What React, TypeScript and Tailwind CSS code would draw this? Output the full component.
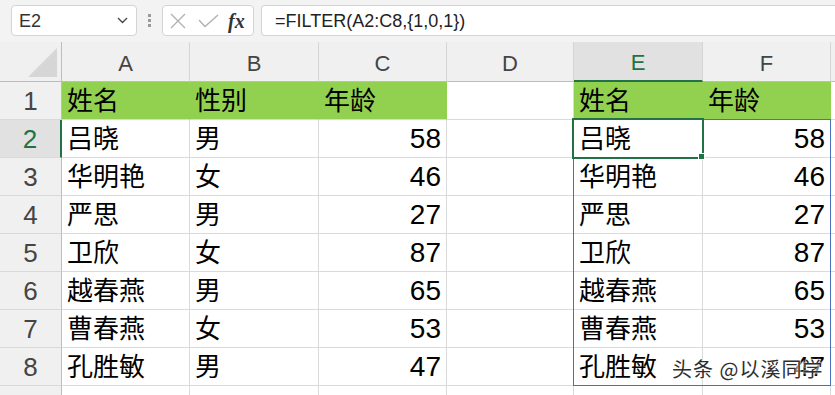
import React from 'react';

const COLS = [
  { k: 'A', w: 'w-[128px]' },
  { k: 'B', w: 'w-[129px]' },
  { k: 'C', w: 'w-[128px]' },
  { k: 'D', w: 'w-[127px]' },
  { k: 'E', w: 'w-[129px]' },
  { k: 'F', w: 'w-[128px]' },
];

const people: [string, string, number][] = [
  ['吕晓', '男', 58],
  ['华明艳', '女', 46],
  ['严思', '男', 27],
  ['卫欣', '女', 87],
  ['越春燕', '男', 65],
  ['曹春燕', '女', 53],
  ['孔胜敏', '男', 47],
];

type Val = string | number;

const Cell: React.FC<{ w: string; v: Val; green?: boolean }> = ({ w, v, green }) => {
  const isNum = typeof v === 'number';
  return (
    <div
      className={`${w} shrink-0 h-full flex items-center leading-none text-black ${
        green ? 'bg-[#92d050] border-r border-b border-r-[#92d050] border-b-[#dadada]' : 'border-r border-b border-[#dadada]'
      } ${isNum ? 'justify-end pr-[5px] text-[28px]' : 'pl-[5px] text-[26px]'}`}
    >
      {v}
    </div>
  );
};

const RowHead: React.FC<{ n: number; active?: boolean }> = ({ n, active }) => (
  <div
    className={`w-[62px] shrink-0 h-full flex items-center justify-center text-[26px] leading-none border-b border-[#d9d9d9] ${
      active ? 'bg-[#e1e1e1] text-[#217346] border-r-2 border-r-[#217346]' : 'bg-[#f0f0f0] text-[#444] border-r border-r-[#bdbdbd]'
    }`}
  >
    {n}
  </div>
);

export default function App() {
  const rows: { vals: Val[]; green: boolean }[] = [
    { vals: ['姓名', '性别', '年龄', '', '姓名', '年龄'], green: true },
    ...people.map(([name, sex, age]) => ({ vals: [name, sex, age, '', name, age] as Val[], green: false })),
  ];

  return (
    <div className="relative w-[835px] h-[395px] overflow-hidden bg-white font-['Liberation_Sans','Noto_Sans_CJK_SC',sans-serif]">
      {/* formula bar */}
      <div className="h-[42px] bg-[#f3f3f3] flex items-start pt-[5px]">
        <div className="ml-[11px] w-[126px] h-[31px] bg-white border border-[#d4d4d4] rounded-[4px] flex items-center justify-between pl-[7px] pr-[8px]">
          <span className="text-[18px] text-[#333] leading-none">E2</span>
          <svg width="11" height="7" viewBox="0 0 11 7">
            <path d="M1 1 L5.5 5.5 L10 1" fill="none" stroke="#444" strokeWidth="1.3" />
          </svg>
        </div>
        <div className="w-[25px] h-[31px] flex flex-col items-center justify-center gap-[2px]">
          <div className="w-[3px] h-[3px] bg-[#9a9a9a]" />
          <div className="w-[3px] h-[3px] bg-[#9a9a9a]" />
          <div className="w-[3px] h-[3px] bg-[#9a9a9a]" />
        </div>
        <div className="w-[92px] h-[31px] bg-white border border-[#d4d4d4] rounded-[4px] flex items-center">
          <svg className="ml-[7px]" width="16" height="16" viewBox="0 0 16 16">
            <path d="M1 1 L15 15 M15 1 L1 15" stroke="#b0b0b0" strokeWidth="1.3" />
          </svg>
          <svg className="ml-[12px]" width="21" height="14" viewBox="0 0 21 14">
            <path d="M1 6 L7 12.5 L20 1" fill="none" stroke="#b0b0b0" strokeWidth="1.3" />
          </svg>
          <span className="ml-[9px] font-['Liberation_Serif',serif] italic font-bold text-[20px] leading-none text-[#333]">fx</span>
        </div>
        <div className="ml-[7px] flex-1 h-[31px] bg-white border border-r-0 border-[#d4d4d4] rounded-l-[4px] flex items-center pl-[13px] text-[18px] leading-none text-[#222]">
          =FILTER(A2:C8,{'{'}1,0,1{'}'})
        </div>
      </div>

      {/* column headers */}
      <div className="flex h-[40px]">
        <div className="w-[62px] shrink-0 h-full bg-[#f0f0f0] border-r border-b border-[#bdbdbd] flex items-end justify-end pr-[3px] pb-[3px]">
          <svg width="30" height="30" viewBox="0 0 30 30">
            <polygon points="29,0 29,29 0,29" fill="#d6d6d6" />
          </svg>
        </div>
        {COLS.map((c) => (
          <div
            key={c.k}
            className={`${c.w} shrink-0 h-full flex items-center justify-center pt-[4px] text-[22px] leading-none border-r border-r-[#d5d5d5] ${
              c.k === 'E' ? 'bg-[#e1e1e1] text-[#217346] border-b-2 border-b-[#217346]' : 'bg-[#f0f0f0] text-[#444] border-b border-b-[#bdbdbd]'
            }`}
          >
            {c.k}
          </div>
        ))}
        <div className="flex-1 h-full bg-[#f0f0f0] border-b border-[#bdbdbd]" />
      </div>

      {/* rows */}
      {rows.map((r, i) => (
        <div key={i} className="flex h-[38px]">
          <RowHead n={i + 1} active={i === 1} />
          {r.vals.map((v, j) => (
            <Cell key={j} w={COLS[j].w} v={v} green={r.green && j !== 3} />
          ))}
          <div className="flex-1 h-full border-b border-[#dadada]" />
        </div>
      ))}
      <div className="flex h-[38px]">
        <RowHead n={9} />
        {COLS.map((c) => (
          <div key={c.k} className={`${c.w} shrink-0 h-full border-r border-[#dadada]`} />
        ))}
      </div>

      {/* spill range border */}
      <div className="absolute left-[573px] top-[119px] w-[258px] h-[267px] border border-[#4a6fbf]" />
      {/* active cell */}
      <div className="absolute left-[572px] top-[118px] w-[132px] h-[41px] border-2 border-[#217346]" />
      <div className="absolute left-[698px] top-[153px] w-[7px] h-[7px] bg-[#217346] border border-white" />

      {/* watermark */}
      <div className="absolute left-[672px] top-[359px] text-[20px] leading-none tracking-[1px] text-[#2e2e2e] font-['Noto_Sans_CJK_SC',sans-serif] [text-shadow:0_0_2px_#fff,0_0_2px_#fff,0_0_3px_#fff]">
        头条 @以溪同学
      </div>
    </div>
  );
}
